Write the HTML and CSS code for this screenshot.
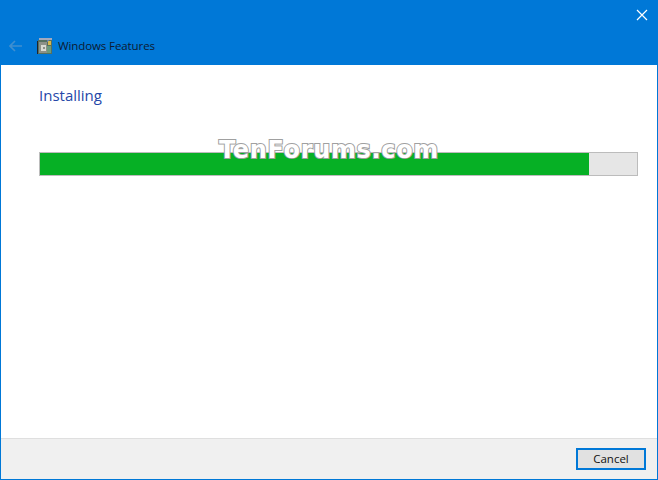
FILE: index.html
```html
<!DOCTYPE html>
<html lang="en">
<head>
<meta charset="utf-8">
<title>Windows Features</title>
<link rel="stylesheet" href="styles.css">
</head>
<body>
<div class="window">
  <header class="titlebar">
    <div class="close-row">
      <svg class="close" width="12" height="12" viewBox="0 0 12 12"><path d="M1 1 L11 11 M11 1 L1 11" stroke="#fff" stroke-width="1.2" fill="none"/></svg>
    </div>
    <div class="title-row">
      <svg class="back" width="13" height="12" viewBox="0 0 13 12"><path d="M6 1 L1 6 L6 11 M1 6 H13" stroke="#3f8fd0" stroke-width="1.6" fill="none"/></svg>
      <svg class="app-icon" width="16" height="16" viewBox="0 0 16 16" shape-rendering="crispEdges">
        <rect x="2" y="0" width="13" height="2" fill="#a3a9bd"/>
        <rect x="1" y="2" width="14" height="14" fill="#56705f"/>
        <rect x="10" y="2" width="2" height="2" fill="#5f7fb0"/>
        <rect x="11" y="3" width="3" height="4" fill="#d8b64a"/>
        <rect x="2" y="4" width="8" height="11" fill="#8d9188"/>
        <rect x="4" y="7" width="5" height="6" fill="#d9dad2"/>
        <rect x="6" y="9" width="2" height="2" fill="#8d9188"/>
        <rect x="10" y="8" width="4" height="7" fill="#6c9a7c"/>
        <rect x="0" y="3" width="1" height="13" fill="#20242c"/>
      </svg>
      <span class="title">Windows Features</span>
    </div>
  </header>
  <main class="content">
    <h1 class="heading">Installing</h1>
    <div class="progress"><div class="progress-fill" style="width:549px"></div></div>
    <div class="watermark">TenForums.com</div>
  </main>
  <footer class="footer">
    <button class="cancel" type="button">Cancel</button>
  </footer>
</div>
</body>
</html>
```
FILE: styles.css
```css
* { box-sizing: border-box; }
html, body { margin: 0; height: 100%; }
body { background: #fff; font-family: "Open Sans", "Noto Sans", "Liberation Sans", sans-serif; overflow: hidden; }
.window { width: 658px; height: 480px; display: flex; flex-direction: column; border: 1px solid #0078d7; border-top: 0; }
.titlebar { height: 65px; margin: 0 -1px; background: #0078d7; display: flex; flex-direction: column; flex: none; }
.close-row { display: flex; justify-content: flex-end; padding: 9px 10px 0 0; height: 34px; }
.close { display: block; }
.title-row { display: flex; align-items: center; padding: 3px 0 0 9px; }
.back { display: block; }
.app-icon { display: block; margin-left: 15px; }
.title { margin-left: 5px; padding-top: 1px; font-size: 11.5px; line-height: 16px; color: #0d1a33; letter-spacing: -0.1px; }
.content { flex: 1; position: relative; padding: 19px 19px 0 38px; background: #fff; }
.heading { margin: 0; font-size: 15px; font-weight: 400; line-height: 22px; color: #2547a8; }
.progress { margin-top: 46px; height: 24px; background: #e6e6e6; border: 1px solid #bcbcbc; }
.progress-fill { height: 100%; background: #06b025; }
.watermark { position: absolute; left: 218px; top: 66px; font-family: "DejaVu Sans", sans-serif; font-size: 24px; font-weight: 700; line-height: 38px; letter-spacing: 0.65px; color: #fff; -webkit-text-stroke: 2px #a0a0a0; paint-order: stroke fill; }
.footer { height: 41px; flex: none; background: #f0f0f0; border-top: 1px solid #dfdfdf; display: flex; justify-content: flex-end; align-items: flex-start; padding: 9px 11px 0 0; }
.cancel { width: 70px; height: 22px; padding: 0; background: #e1e1e1; border: 2px solid #0078d7; font-family: inherit; font-size: 11.5px; line-height: 16px; color: #111; }
```
